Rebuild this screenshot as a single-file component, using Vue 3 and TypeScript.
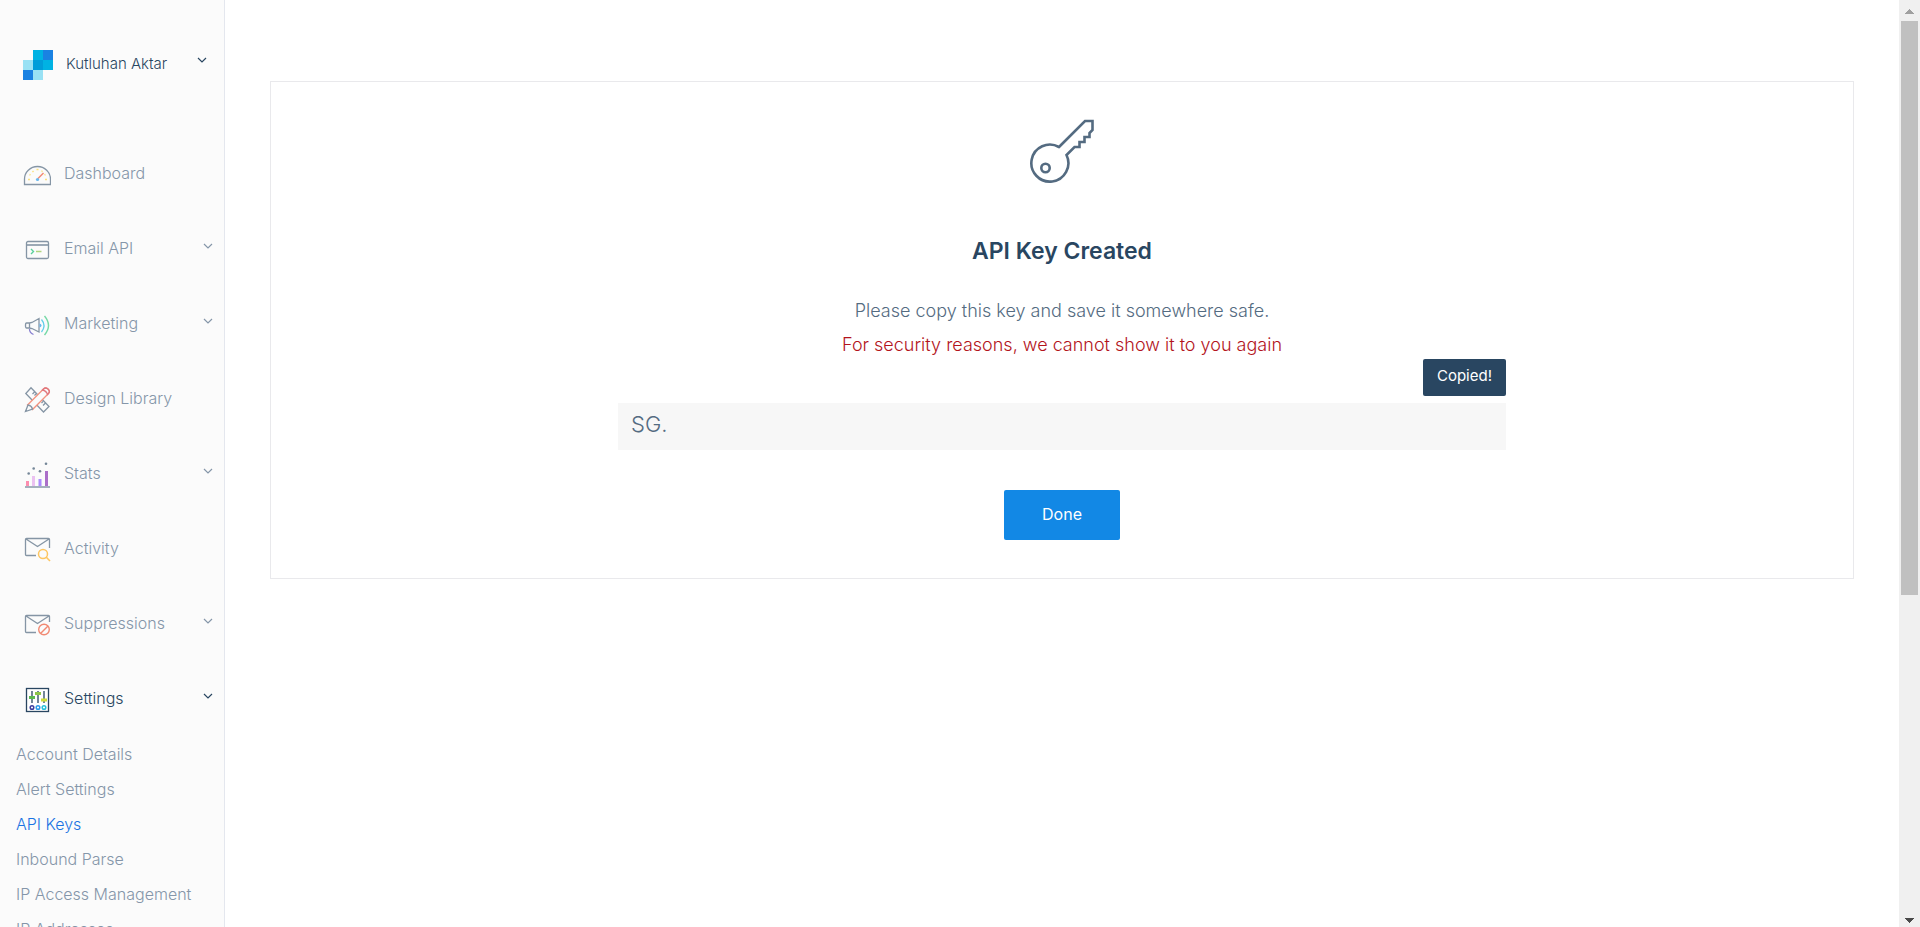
<script setup lang="ts">
import { ref } from 'vue'

interface NavItem {
  id: string
  label: string
  expandable: boolean
  active?: boolean
}

const user = 'Kutluhan Aktar'

const navItems: NavItem[] = [
  { id: 'dashboard', label: 'Dashboard', expandable: false },
  { id: 'email', label: 'Email API', expandable: true },
  { id: 'marketing', label: 'Marketing', expandable: true },
  { id: 'design', label: 'Design Library', expandable: false },
  { id: 'stats', label: 'Stats', expandable: true },
  { id: 'activity', label: 'Activity', expandable: false },
  { id: 'suppressions', label: 'Suppressions', expandable: true },
  { id: 'settings', label: 'Settings', expandable: true, active: true },
]

const settingsLinks: string[] = [
  'Account Details',
  'Alert Settings',
  'API Keys',
  'Inbound Parse',
  'IP Access Management',
  'IP Addresses',
]

const currentLink = 'API Keys'
const apiKey = ref('SG.')
</script>

<template>
  <div class="app">
    <aside class="sidebar">
      <button class="account" type="button">
        <svg class="logo" viewBox="0 0 30 30" shape-rendering="crispEdges" aria-hidden="true">
          <rect x="10" y="0" width="10" height="10" fill="#00b2e3" />
          <rect x="20" y="0" width="10" height="10" fill="#1a82e2" />
          <rect x="0" y="10" width="10" height="10" fill="#99e1f4" />
          <rect x="10" y="10" width="10" height="10" fill="#009dd9" />
          <rect x="20" y="10" width="10" height="10" fill="#00b2e3" />
          <rect x="0" y="20" width="10" height="10" fill="#1a82e2" />
          <rect x="10" y="20" width="10" height="10" fill="#99e1f4" />
        </svg>
        <span class="account-name">{{ user }}</span>
        <svg class="chevron" viewBox="0 0 10 6" aria-hidden="true"><path d="M1 1l4 4 4-4" /></svg>
      </button>

      <nav class="nav" aria-label="Main">
        <a
          v-for="item in navItems"
          :key="item.id"
          href="#"
          class="nav-item"
          :class="{ active: item.active }"
        >
          <svg class="icon" viewBox="0 0 28 28" aria-hidden="true">
            <g v-if="item.id === 'dashboard'">
              <path d="M1.5 23.5V18A13 12.5 0 0 1 27.5 18V23.5Z" />
              <path d="M5 18.5h2M22 18.5h2M6.5 13.5l1 .5M9.500 10l1 1M13.5 8.5h2M18.5 10.5l1-.5M21.5 14l1-.5" stroke="#fbd84a" stroke-width="1.6" />
              <path d="M15 17.5l5.500-5.500" stroke="#f0573a" stroke-width="1.4" />
              <circle cx="14.5" cy="18.5" r="1.6" fill="#2b9bea" stroke="none" />
            </g>
            <g v-else-if="item.id === 'email'">
              <rect x="3.5" y="5.5" width="22" height="17" rx="1.5" />
              <path d="M3.5 9h22" stroke-width="1.6" />
              <path d="M8 13l2.5 2.5L8 18" stroke="#17bf74" stroke-width="1.4" />
              <path d="M13 15.5h5.5" stroke="#8fc64a" stroke-width="1.5" />
            </g>
            <g v-else-if="item.id === 'marketing'">
              <path d="M6.5 12H3.5Q2.5 12 2.5 14.5T3.5 17H6.5L9 17.5L16 21V7.5L9 11.5ZM6.5 12V17" />
              <path d="M6.5 18Q6.5 22 10.5 23.5" stroke="#5a4fc0" />
              <path d="M16.5 12.5v4q2-.5 2-2t-2-2z" fill="#2b9bea" stroke="none" />
              <path d="M18.5 8.5q5 6 0 12.5" stroke="#1fbde0" />
              <path d="M21.5 5q8 9.5 0 19" stroke="#3ecb83" stroke-width="1.4" />
            </g>
            <g v-else-if="item.id === 'design'">
              <path d="M8 1.8L26 20.5 20.5 26 2.8 7.5ZM9.5 8l2.5-2.5M11.5 9.5l1.5-1.5M18.5 17l1.5-1.5M20 19.5l2.5-2.5" />
              <path d="M4.5 19L20.5 3q2-2 4.5 0 2.5 2.5.5 4.5L9.5 23.5Z" fill="#fbfbfb" stroke="#f0674a" stroke-width="1.3" />
              <path d="M20.5 3q2-2 4.5 0 2.5 2.5.5 4.5L24.5 8.5q-1-3.500-5-4.500Z" stroke="#d6404b" />
              <path d="M5 19l-2.5 6.5 7-2.5Q8.5 19.5 5 19Z" fill="#fbfbfb" />
            </g>
            <g v-else-if="item.id === 'stats'" stroke="none">
              <rect x="3" y="20" width="3" height="5" fill="#ff5f8f" />
              <rect x="9" y="15" width="3" height="10" fill="#e5a9ee" />
              <rect x="15.5" y="18" width="3" height="7" fill="#8a5cff" />
              <rect x="22" y="10" width="3" height="15" fill="#8a35b4" />
              <rect x="2" y="25" width="25" height="2" fill="#8090a4" />
              <g fill="#3c566e">
                <circle cx="5.7" cy="12.5" r="1.3" />
                <circle cx="10.7" cy="7.5" r="1.3" />
                <circle cx="17" cy="10.3" r="1.3" />
                <circle cx="23" cy="2.7" r="1.3" />
              </g>
            </g>
            <g v-else-if="item.id === 'activity'">
              <path d="M13 19.5H3.5q-1 0-1-1V3.500q0-1 1-1H25.5q1 0 1 1V12M3 3l11.5 7.5L26 3" />
              <circle cx="20" cy="18" r="4.5" stroke="#ffb020" stroke-width="1.5" />
              <path d="M23.3 21.3l3.7 3.7" stroke="#ffb020" stroke-width="1.6" />
            </g>
            <g v-else-if="item.id === 'suppressions'">
              <path d="M13 21.5H3.5q-1 0-1-1V5.500q0-1 1-1H25.5q1 0 1 1V11M3 5l11.5 7.5L26 5" />
              <g stroke="#ee5a3a" stroke-width="1.4">
                <circle cx="21" cy="18.5" r="5.3" />
                <path d="M17.5 22.500l7.500-7.500" />
              </g>
            </g>
            <g v-else>
              <rect x="3.5" y="2.5" width="22" height="23" fill="#fff" />
              <path d="M9 5v12M15 5v12M21 5v12" />
              <path d="M6 11.5h6" stroke="#5cb94f" stroke-width="3" />
              <path d="M12 7.5h6" stroke="#8fc64a" stroke-width="3" />
              <path d="M18 14h6" stroke="#cddc39" stroke-width="3" />
              <g stroke-width="1.5">
                <circle cx="9" cy="21.5" r="1.8" stroke="#3f3d9e" />
                <circle cx="15" cy="21.5" r="1.8" stroke="#2b9bea" />
                <circle cx="21" cy="21.5" r="1.8" stroke="#26c1da" />
              </g>
            </g>
          </svg>
          <span class="nav-label">{{ item.label }}</span>
          <svg v-if="item.expandable" class="chevron" viewBox="0 0 10 6" aria-hidden="true">
            <path d="M1 1l4 4 4-4" />
          </svg>
        </a>
        <ul class="subnav">
          <li v-for="link in settingsLinks" :key="link">
            <a href="#" :class="{ current: link === currentLink }">{{ link }}</a>
          </li>
        </ul>
      </nav>
    </aside>

    <main class="content">
      <section class="panel">
        <svg class="key-icon" viewBox="0 0 64 64" aria-hidden="true">
          <path d="M29 28L55 2H62.500V11L59.500 14V18H54.500V23H49.500V28H44.500L36.500 36A18.500 18.500 0 1 1 29 28Z" />
          <circle cx="15.5" cy="49" r="4.2" />
        </svg>
        <h1>API Key Created</h1>
        <p>Please copy this key and save it somewhere safe.</p>
        <p class="warning">For security reasons, we cannot show it to you again</p>
        <div class="key-field">
          <input v-model="apiKey" type="text" aria-label="API key" readonly />
          <span class="tooltip" role="status">Copied!</span>
        </div>
        <button class="done" type="button">Done</button>
      </section>
    </main>

    <div class="scrollbar" aria-hidden="true">
      <svg viewBox="0 0 9 5" class="up" shape-rendering="crispEdges"><path d="M0 5L4.500 0 9 5Z" /></svg>
      <div class="track"><div class="thumb"></div></div>
      <svg viewBox="0 0 9 5" class="down" shape-rendering="crispEdges"><path d="M0 0L4.500 5 9 0Z" /></svg>
    </div>
  </div>
</template>

<style>
body {
  margin: 0;
  overflow: hidden;
}
</style>

<style scoped>
.app {
  display: grid;
  grid-template-columns: 225px 1fr 21px;
  grid-template-rows: 100vh;
  overflow: hidden;
  background: #fff;
  color: #546b81;
  font-family: Inter, Roboto, 'Liberation Sans', sans-serif;
  font-weight: 300;
  font-size: 16px;
}

.app *,
.app *::before {
  box-sizing: border-box;
}

a {
  color: inherit;
  text-decoration: none;
}

button,
input {
  font: inherit;
  color: inherit;
  border: 0;
  margin: 0;
}

.sidebar {
  overflow: hidden;
  background: #fbfbfb;
  border-right: 1px solid #e4e7ee;
}

.account {
  display: flex;
  align-items: flex-start;
  width: 100%;
  height: 136px;
  padding: 50px 17px 0 23px;
  background: none;
  text-align: left;
  color: #294661;
  font-size: 15px;
}

.logo {
  width: 30px;
  height: 30px;
  margin-right: 13px;
}

.account-name {
  flex: 1;
  line-height: 28px;
}

.chevron {
  flex: none;
  width: 10px;
  height: 6px;
  fill: none;
  stroke: currentColor;
  stroke-width: 1.2;
}

.account .chevron {
  margin-top: 7px;
}

.nav-item {
  display: flex;
  align-items: center;
  height: 75px;
  padding: 0 11px 2px 23px;
  color: #8596a9;
}

.nav-item.active {
  color: #294661;
}

.icon {
  flex: none;
  width: 28px;
  height: 28px;
  margin: 5px 13px 0 0;
  fill: none;
  stroke: #546b81;
  stroke-width: 1.3;
  opacity: 0.7;
}

.active .icon {
  stroke: #294661;
  opacity: 1;
}

.nav-label {
  flex: 1;
}

.nav-item .chevron {
  margin-bottom: 4px;
}

.subnav {
  list-style: none;
  margin: 0;
  padding: 1px 0 0 16px;
}

.subnav a {
  display: block;
  line-height: 35px;
  color: #8596a9;
  white-space: nowrap;
}

.subnav a.current {
  color: #1a73e2;
}

.content {
  padding: 81px 45px 0;
}

.panel {
  display: flex;
  flex-direction: column;
  align-items: center;
  padding: 37px 24px 38px;
  border: 1px solid #e9e9ec;
}

.key-icon {
  width: 64px;
  height: 64px;
  fill: none;
  stroke: #546b81;
  stroke-width: 2.6;
}

h1 {
  margin: 50px 0 25px;
  font-size: 23px;
  line-height: 36px;
  font-weight: 600;
  color: #294661;
}

p {
  margin: 0;
  font-size: 18px;
  line-height: 34px;
}

.warning {
  color: #b3141c;
}

.key-field {
  position: relative;
  width: 888px;
  max-width: 100%;
  margin: 41px 0 40px;
}

.key-field input {
  display: block;
  width: 100%;
  height: 47px;
  padding: 0 13px 5px;
  background: #f7f7f7;
  font-size: 22px;
  border-radius: 0;
  outline: 0;
}

.tooltip {
  position: absolute;
  right: 0;
  bottom: calc(100% + 7px);
  padding: 0 14px 3px;
  line-height: 34px;
  border-radius: 2px;
  background: #294661;
  color: #fff;
  font-size: 15px;
  font-weight: 400;
}

.done {
  width: 116px;
  height: 50px;
  padding: 0 0 2px;
  border-radius: 2px;
  background: #1288e5;
  color: #fff;
  font-weight: 400;
}

.scrollbar {
  display: flex;
  flex-direction: column;
  align-items: center;
  background: #f0f0f0;
}

.scrollbar svg {
  width: 9px;
  height: 5px;
}

.up {
  margin: 9px 0 7px;
  fill: #a0a0a0;
}

.down {
  margin: 7px 0 4px;
  fill: #4a4a4a;
}

.track {
  flex: 1;
  width: 17px;
}

.thumb {
  height: 64.5%;
  background: #c0c0c0;
}
</style>
